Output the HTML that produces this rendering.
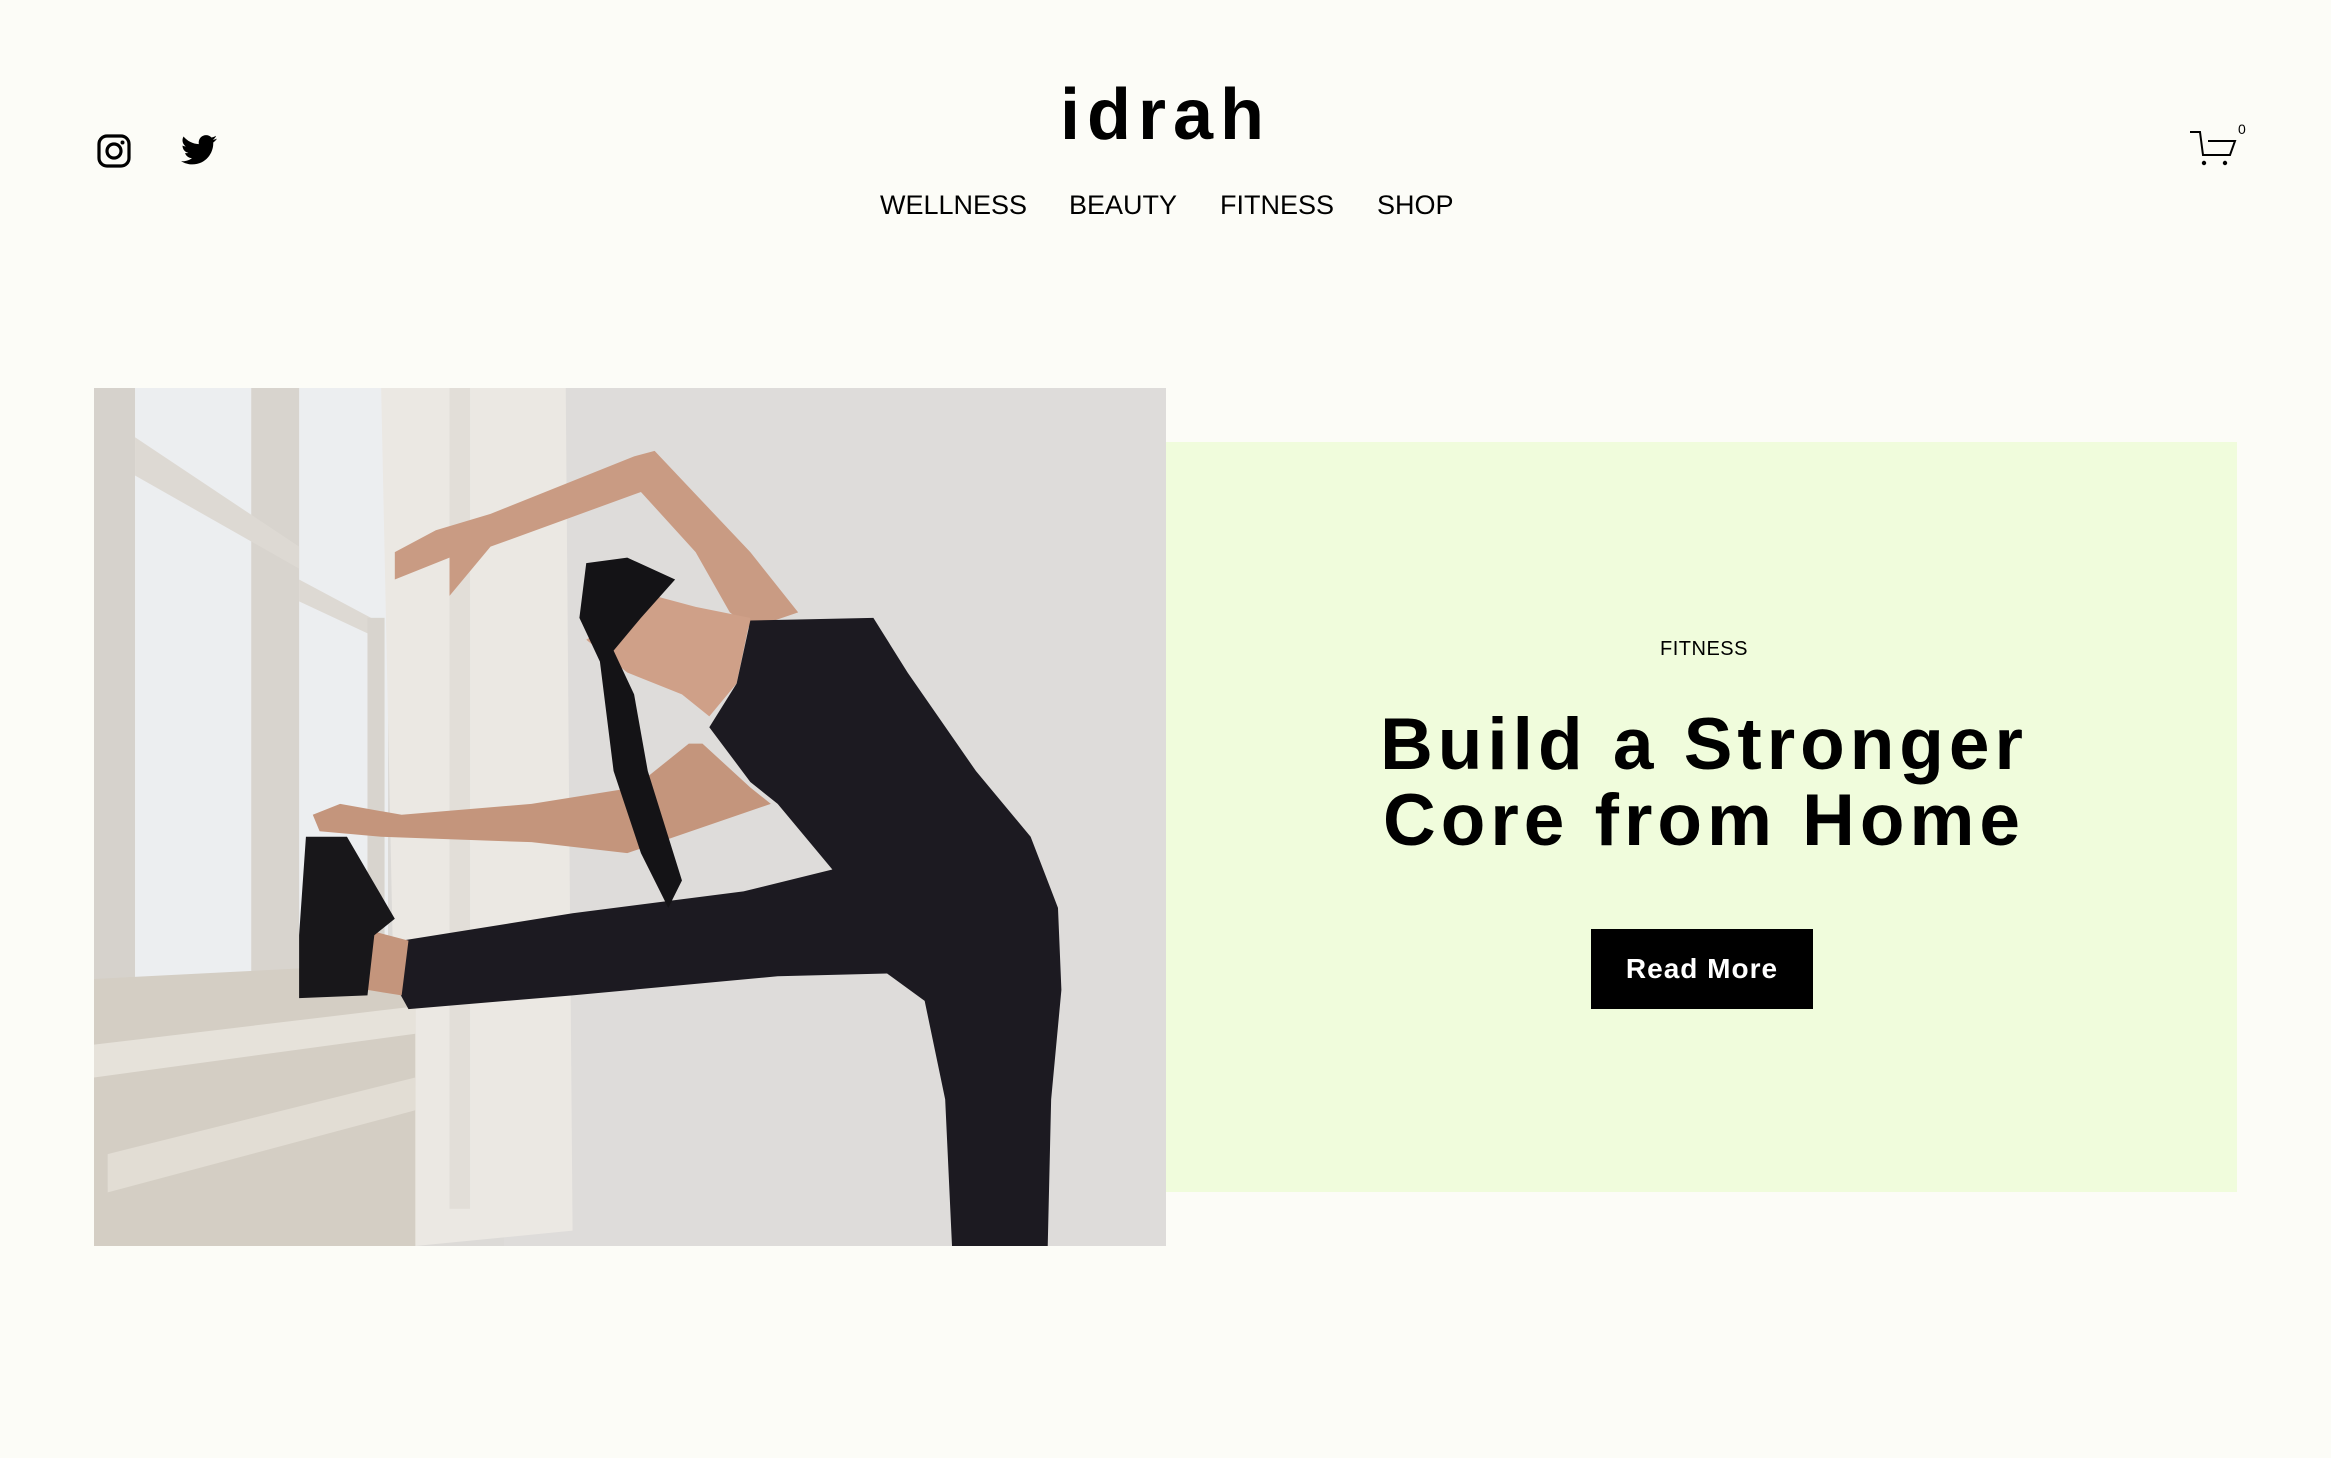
<!DOCTYPE html>
<html><head><meta charset="utf-8"><style>
html,body{margin:0;padding:0}
body{width:2331px;height:1458px;background:#fcfcf7;position:relative;overflow:hidden;font-family:"Liberation Sans",sans-serif;color:#000}
.abs{position:absolute}
.logo{left:0;width:2331px;top:70px;text-align:center;font-size:72px;font-weight:bold;letter-spacing:7px;line-height:90px}
.nav{top:188px;left:880px;font-size:27px;line-height:34px}
.nav span{position:absolute;white-space:nowrap}
.panel{left:1166px;top:442px;width:1071px;height:750px;background:#f0fcdc}
.tag{left:1166px;width:1076px;top:638px;text-align:center;font-size:20px;letter-spacing:0.5px}
.h{left:1166px;width:1076px;top:707px;text-align:center;font-size:73px;font-weight:bold;line-height:76px;letter-spacing:5px}
.btn{left:1591px;top:929px;width:222px;height:80px;background:#000;color:#fff;font-size:28px;font-weight:bold;text-align:center;line-height:80px;letter-spacing:1px}
</style></head><body>
<div class="abs logo">idrah</div>
<div class="abs nav">
<span style="left:0">WELLNESS</span><span style="left:189px">BEAUTY</span><span style="left:340px">FITNESS</span><span style="left:497px">SHOP</span>
</div>
<svg class="abs" style="left:97px;top:134px" width="34" height="34" viewBox="0 0 34 34"><rect x="2" y="2" width="30" height="30" rx="8" fill="none" stroke="#000" stroke-width="3.2"/><circle cx="17" cy="17" r="7" fill="none" stroke="#000" stroke-width="3.2"/><circle cx="25.5" cy="8.5" r="2" fill="#000"/></svg>
<svg class="abs" style="left:181px;top:134px" width="36" height="32" viewBox="0 0 24 20"><path d="M24 2.4c-.9.4-1.8.6-2.8.8 1-.6 1.8-1.6 2.2-2.7-1 .6-2 1-3.1 1.2C19.4.7 18.1.1 16.7.1c-2.7 0-4.9 2.2-4.9 4.9 0 .4 0 .8.1 1.1C7.8 5.9 4.2 4 1.7 1 1.3 1.7 1 2.6 1 3.5c0 1.7.9 3.2 2.2 4.1-.8 0-1.6-.2-2.2-.6v.1c0 2.4 1.7 4.4 3.9 4.8-.4.1-.8.2-1.3.2-.3 0-.6 0-.9-.1.6 2 2.4 3.4 4.6 3.4-1.7 1.3-3.8 2.1-6.1 2.1-.4 0-.8 0-1.2-.1 2.2 1.4 4.8 2.2 7.5 2.2 9.1 0 14-7.5 14-14v-.6c1-.7 1.8-1.6 2.5-2.6z" fill="#000"/></svg>
<svg class="abs" style="left:2186px;top:122px" width="70" height="50" viewBox="0 0 70 50"><path d="M4 10h10l3 23h27l5-14H22" fill="none" stroke="#000" stroke-width="2"/><circle cx="18" cy="41" r="2.2" fill="#000"/><circle cx="39" cy="41" r="2.2" fill="#000"/><text x="52" y="12" font-family="Liberation Sans" font-size="14" fill="#000">0</text></svg>

<div class="abs panel"></div>
<svg class="abs" style="left:94px;top:388px" width="1072" height="858" viewBox="0 0 1568 1568" preserveAspectRatio="none">
<rect width="1568" height="1568" fill="#dcdad7"/>
<rect x="600" width="968" height="1568" fill="#dedcda"/>
<rect x="0" y="0" width="430" height="1150" fill="#eceef0"/>
<rect x="0" y="0" width="60" height="1200" fill="#d6d2cc"/>
<rect x="230" y="0" width="70" height="1100" fill="#d8d4ce"/>
<polygon points="60,90 300,290 300,330 60,160" fill="#ddd9d3"/>
<polygon points="300,350 420,430 420,460 300,390" fill="#ddd9d3"/>
<rect x="400" y="420" width="25" height="700" fill="#d8d4ce"/>
<polygon points="420,0 690,0 700,1540 470,1568 440,1200" fill="#ebe8e3"/>
<rect x="520" y="0" width="30" height="1500" fill="#e2ded8"/>
<polygon points="0,1080 470,1050 470,1568 0,1568" fill="#d4cec4"/>
<polygon points="0,1200 470,1130 470,1180 0,1260" fill="#e6e2da"/>
<polygon points="20,1400 470,1260 470,1320 20,1470" fill="#e2ddd4"/>
<polygon points="960,440 1030,410 960,300 820,115 790,125 580,230 500,260 440,300 440,350 520,310 520,380 580,290 800,190 880,300 930,410" fill="#c99b83"/>
<polygon points="890,650 960,730 990,760 780,850 640,830 420,820 330,810 320,780 360,760 450,780 640,760 790,730 870,650" fill="#c4957c"/>
<polygon points="720,460 820,380 880,400 960,420 940,540 900,600 860,560 780,520" fill="#cfa088"/>
<polygon points="960,425 1140,420 1190,520 1290,700 1370,820 1410,950 1415,1100 1400,1300 1395,1568 1255,1568 1245,1300 1215,1120 1160,1070 1000,1075 700,1110 460,1135 440,1090 450,1010 700,960 950,920 1080,880 1000,760 960,720 900,620 940,540" fill="#1c1a21"/>
<polygon points="720,320 780,310 850,350 800,420 760,480 790,560 810,700 860,900 840,950 800,850 760,700 740,500 710,420" fill="#141316"/>
<polygon points="400,990 460,1010 450,1110 400,1100" fill="#c4957c"/>
<polygon points="310,820 370,820 440,970 410,1000 400,1110 300,1115 300,1000" fill="#18171a"/>
</svg>

<div class="abs tag">FITNESS</div>
<div class="abs h">Build a Stronger<br>Core from Home</div>
<div class="abs btn">Read More</div>
</body></html>
